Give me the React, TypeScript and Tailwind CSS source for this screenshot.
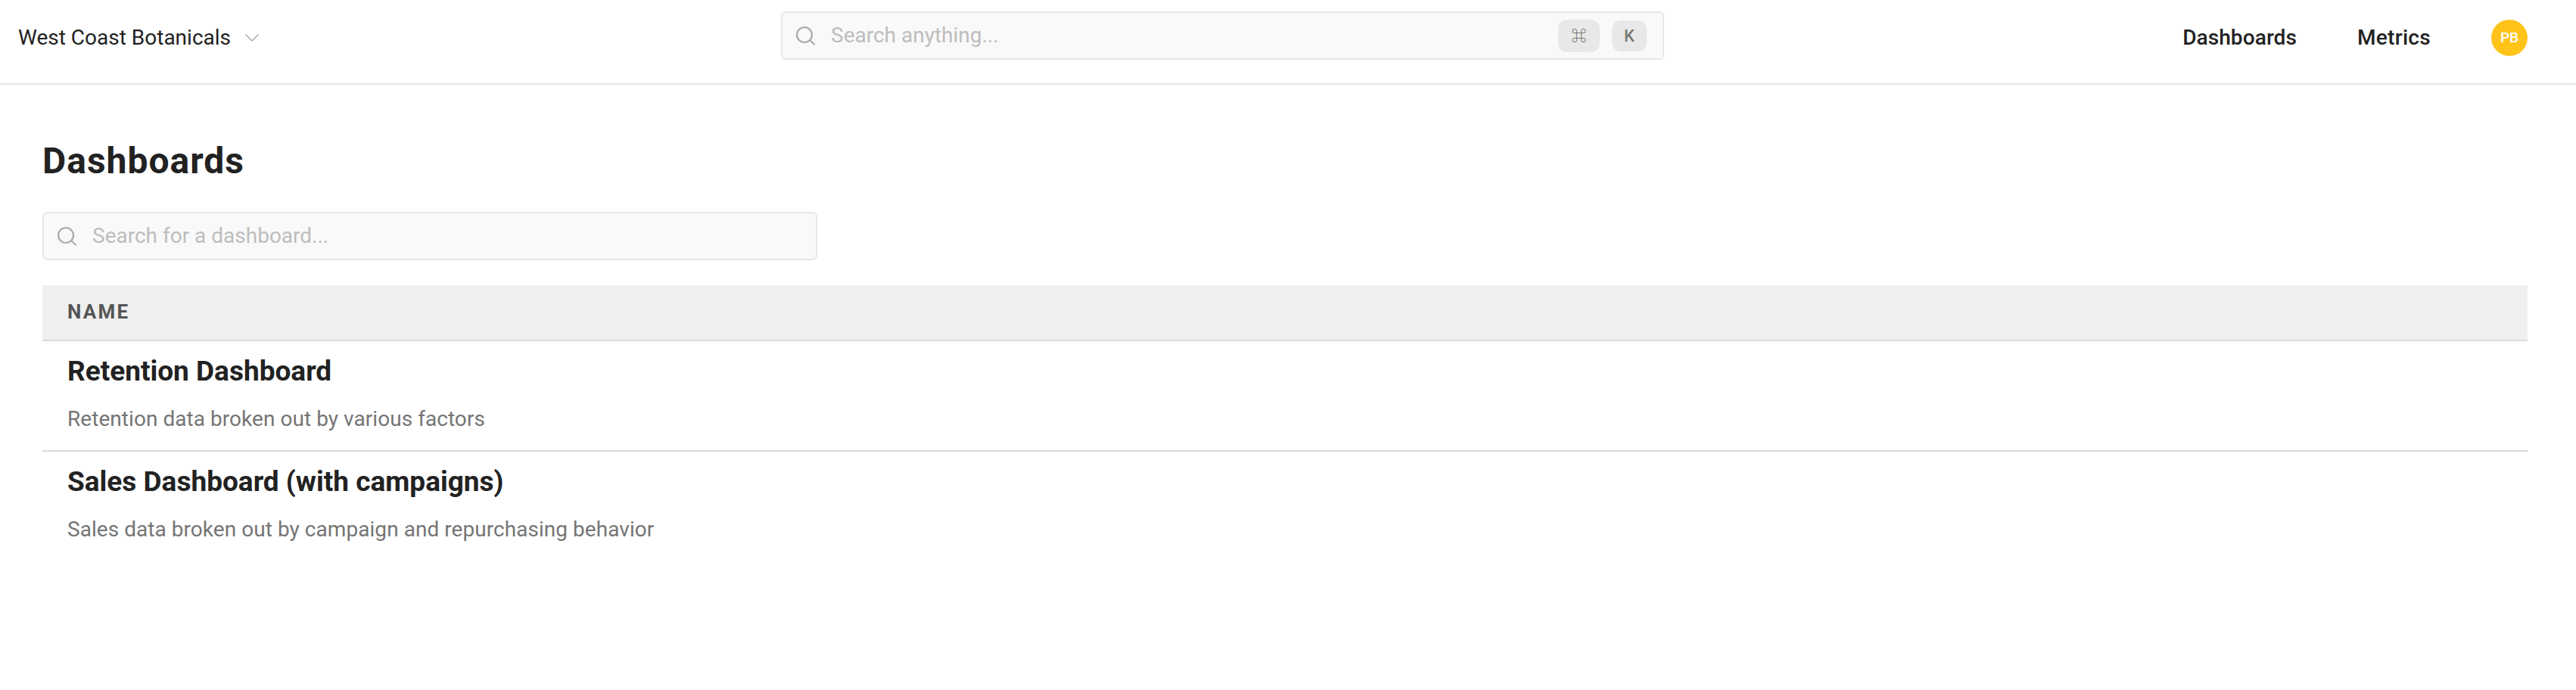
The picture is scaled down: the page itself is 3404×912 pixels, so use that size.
import { ChevronDown } from "lucide-react";

const rows = [
  { name: "Retention Dashboard", desc: "Retention data broken out by various factors" },
  { name: "Sales Dashboard (with campaigns)", desc: "Sales data broken out by campaign and repurchasing behavior" },
];

function SearchIcon() {
  return (
    <svg width="28" height="28" viewBox="0 0 28 28" fill="none" stroke="#aaaaaa" strokeWidth="2.2" strokeLinecap="round">
      <circle cx="12" cy="13" r="10" />
      <path d="M19.5 20.5L25 25.5" />
    </svg>
  );
}

function SearchBox({ placeholder, className, children }: { placeholder: string; className: string; children?: React.ReactNode }) {
  return (
    <div className={`flex h-[64px] items-center rounded-[6px] border-2 border-[#e8e8e8] bg-[#f9f9f9] pl-[17px] ${className}`}>
      <SearchIcon />
      <span className="ml-[19px] flex-1 text-[28px] text-[#bdbdbd]">{placeholder}</span>
      {children}
    </div>
  );
}

export default function App() {
  return (
    <div className="h-[912px] bg-white font-['Roboto',sans-serif] text-[#222222]">
      <header className="flex h-[112px] items-center border-b-2 border-[#e6e6e6] pb-[16px]">
        <div className="mt-[6px] flex w-[1032px] items-center pl-[24px]">
          <span className="text-[28px]">West Coast Botanicals</span>
          <ChevronDown size={32} strokeWidth={1.15} className="ml-[12px] text-[#aaaaaa]" />
        </div>
        <SearchBox placeholder="Search anything..." className="w-[1167px] pr-[21px]">
          <kbd className="flex h-[43px] w-[55px] items-center justify-center rounded-[12px] bg-[#e8e8e8] font-['Noto_Sans_CJK_JP','DejaVu_Sans',sans-serif] text-[20px] font-medium text-[#666666]">⌘</kbd>
          <kbd className="ml-[16px] flex h-[41px] w-[46px] items-center justify-center rounded-[12px] bg-[#e8e8e8] font-['Roboto',sans-serif] text-[22px] font-medium text-[#777777]">K</kbd>
        </SearchBox>
        <nav className="mt-[6px] flex flex-1 items-center justify-end pr-[64px]">
          <a className="text-[28px] font-medium tracking-[0.1px]">Dashboards</a>
          <a className="ml-[80px] text-[28px] font-medium tracking-[0.3px]">Metrics</a>
          <div className="ml-[80px] flex h-[48px] w-[48px] items-center justify-center rounded-full bg-[#ffc31a] text-[19px] font-medium text-white">PB</div>
        </nav>
      </header>
      <main className="pl-[56px] pr-[64px] pt-[72px]">
        <h1 className="text-[48px] leading-[58px] font-bold tracking-[1px]">Dashboards</h1>
        <SearchBox placeholder="Search for a dashboard..." className="mt-[38px] w-[1024px]" />
        <div className="mt-[33px]">
          <div className="flex h-[74px] items-center border-b-2 border-[#dcd9d9] bg-[#efefef] pb-[2px] pl-[33px] text-[26px] font-bold tracking-[2.2px] text-[#555555]">NAME</div>
          {rows.map((row) => (
            <div key={row.name} className="h-[146px] border-b-2 border-[#dcd9d9] pl-[33px] pt-[18px] last:border-b-0">
              <div className="text-[37px] leading-[44px] font-bold">{row.name}</div>
              <div className="mt-[22px] text-[28px] leading-[38px] tracking-[0.05px] text-[#757575]">{row.desc}</div>
            </div>
          ))}
        </div>
      </main>
    </div>
  );
}
